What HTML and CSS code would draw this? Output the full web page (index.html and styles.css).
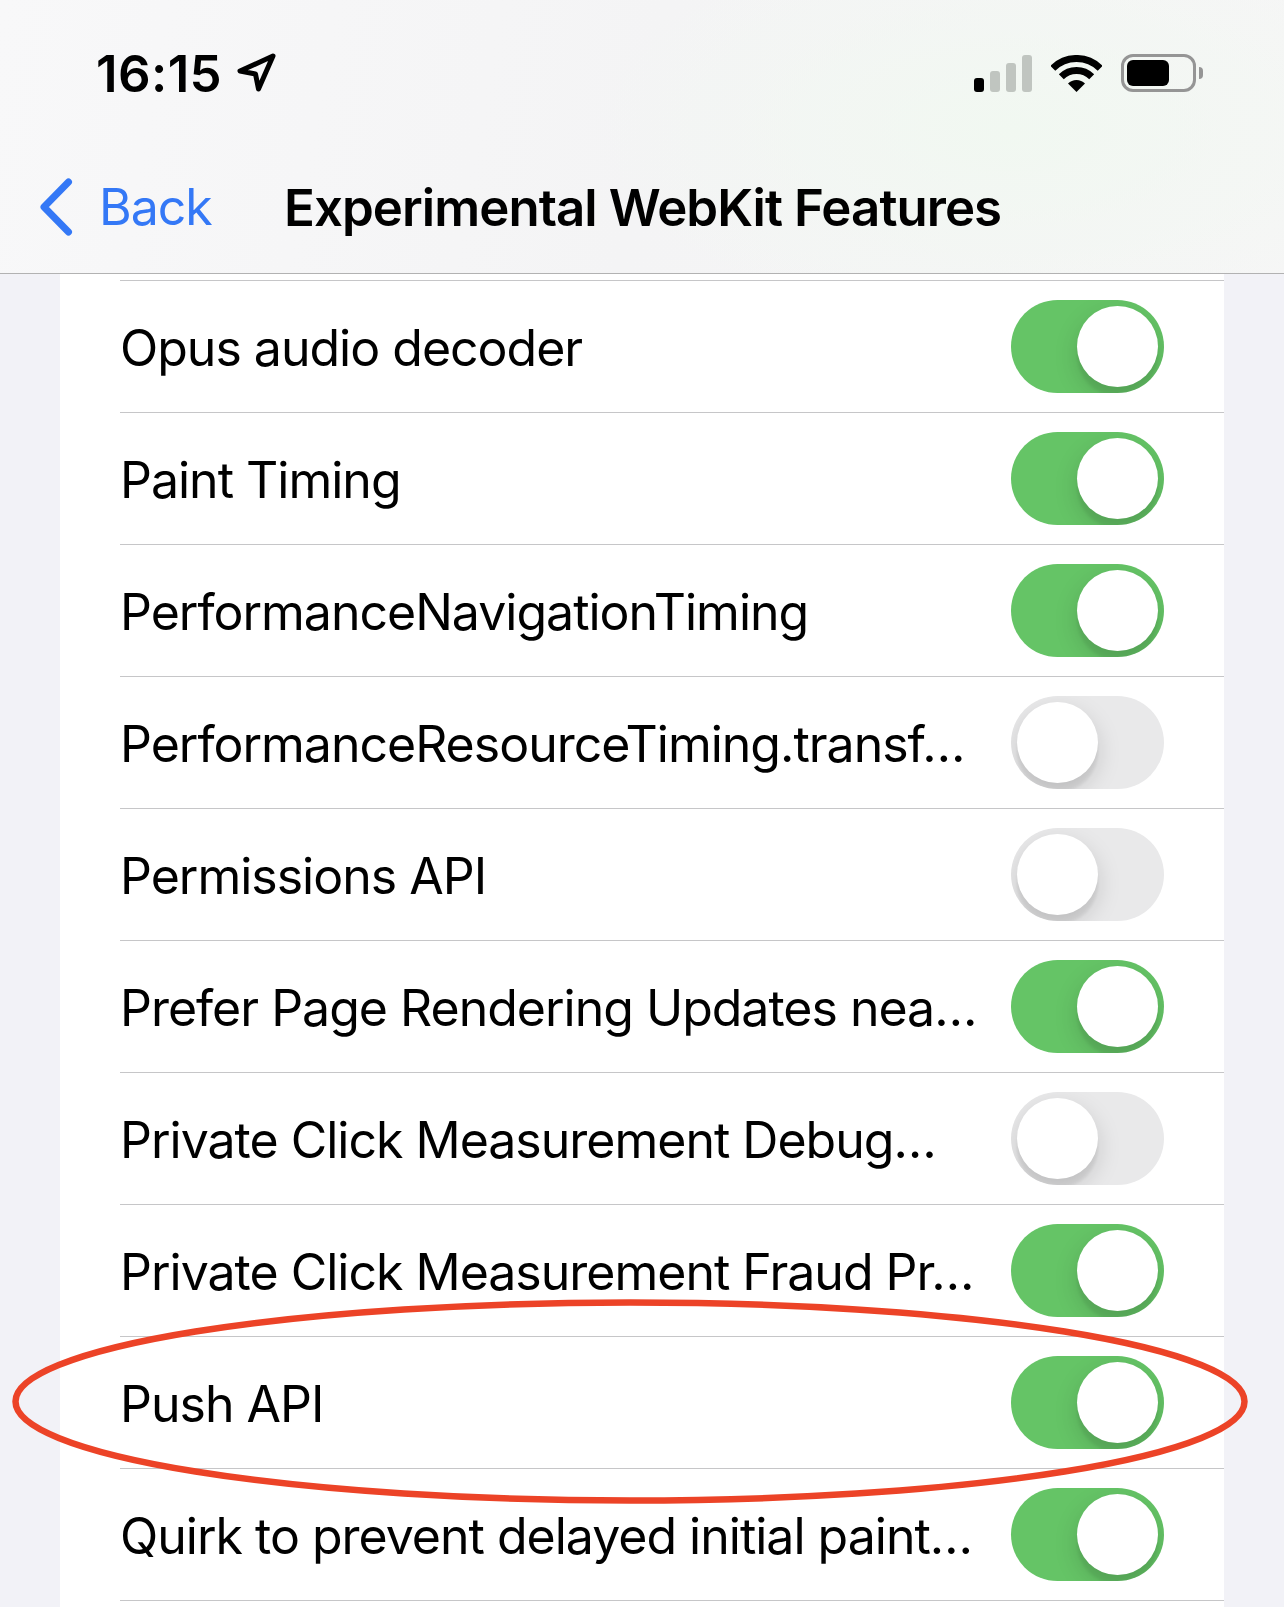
FILE: index.html
```html
<!DOCTYPE html>
<html lang="en">
<head>
  <meta charset="UTF-8">
  <title>Experimental WebKit Features</title>
  <link rel="stylesheet" href="styles.css">
</head>
<body>
  <header class="top">
    <div class="status">
      <div class="clock">
        <span class="time">16:15</span>
        <svg class="loc" viewBox="0 0 40 40" width="40" height="40"><path d="M36 3 L3 18 L18.5 21 L21.5 36 Z" fill="none" stroke="#000" stroke-width="5" stroke-linejoin="round"/></svg>
      </div>
      <div class="indicators">
        <div class="signal">
          <span class="bar bar1"></span>
          <span class="bar bar2"></span>
          <span class="bar bar3"></span>
          <span class="bar bar4"></span>
        </div>
        <svg class="wifi" viewBox="0 0 51 37" width="51" height="37">
          <path d="M1.8 13.3 A33.5 33.5 0 0 1 49.2 13.3" fill="none" stroke="#000" stroke-width="7"/>
          <path d="M10.3 21.8 A21.5 21.5 0 0 1 40.7 21.8" fill="none" stroke="#000" stroke-width="7"/>
          <path d="M25.5 37 L17 28.5 A12 12 0 0 1 34 28.5 Z"/>
        </svg>
        <div class="battery"><span class="charge"></span></div>
        <span class="battery-cap"></span>
      </div>
    </div>
    <nav class="navbar">
      <a class="back" href="#">
        <svg viewBox="0 0 34 58" width="34" height="58"><path d="M29.5 4 L5 29 L29.5 54" fill="none" stroke="#3478f6" stroke-width="7" stroke-linecap="round" stroke-linejoin="round"/></svg>
        <span>Back</span>
      </a>
      <h1>Experimental WebKit Features</h1>
    </nav>
  </header>

  <main class="list">
    <div class="sliver"></div>
    <div class="row"><span class="label">Opus audio decoder</span><div class="toggle on"><span class="thumb"></span></div></div>
    <div class="row"><span class="label">Paint Timing</span><div class="toggle on"><span class="thumb"></span></div></div>
    <div class="row"><span class="label">PerformanceNavigationTiming</span><div class="toggle on"><span class="thumb"></span></div></div>
    <div class="row"><span class="label">PerformanceResourceTiming.transf…</span><div class="toggle"><span class="thumb"></span></div></div>
    <div class="row"><span class="label">Permissions API</span><div class="toggle"><span class="thumb"></span></div></div>
    <div class="row"><span class="label">Prefer Page Rendering Updates nea…</span><div class="toggle on"><span class="thumb"></span></div></div>
    <div class="row"><span class="label">Private Click Measurement Debug…</span><div class="toggle"><span class="thumb"></span></div></div>
    <div class="row"><span class="label">Private Click Measurement Fraud Pr…</span><div class="toggle on"><span class="thumb"></span></div></div>
    <div class="row"><span class="label">Push API</span><div class="toggle on"><span class="thumb"></span></div></div>
    <div class="row"><span class="label">Quirk to prevent delayed initial paint…</span><div class="toggle on"><span class="thumb"></span></div></div>
  </main>

  <!-- hand-drawn red marker round the Push API row -->
  <svg class="marker" viewBox="0 0 1284 1607" width="1284" height="1607">
    <ellipse cx="630" cy="1401.5" rx="614.5" ry="99" fill="none" stroke="#ec4327" stroke-width="6.5"/>
  </svg>
</body>
</html>
```

FILE: styles.css
```css
* {
  margin: 0;
  padding: 0;
  box-sizing: border-box;
}
body {
  position: relative;
  width: 1284px;
  height: 1607px;
  overflow: hidden;
  display: flex;
  flex-direction: column;
  background: #f2f2f7;
  font-family: Inter, "Liberation Sans", sans-serif;
  color: #000;
}
.top {
  height: 274px;
  flex-shrink: 0;
  border-bottom: 1px solid #b2b2b2;
  background:
    radial-gradient(ellipse 420px 200px at 1010px 130px, #f1f8f1, rgba(241, 248, 241, 0)),
    linear-gradient(100deg, #f8f8f9, #f4f4f5 50%, #f6f6f6);
}
.status {
  display: flex;
  justify-content: space-between;
  align-items: center;
  height: 146px;
  padding: 0 81px 0 96px;
}
.clock {
  display: flex;
  align-items: center;
  gap: 15px;
}
.time {
  font-size: 51px;
  font-weight: 600;
  letter-spacing: 0.4px;
}
.indicators {
  display: flex;
  align-items: center;
}
.signal {
  display: flex;
  align-items: flex-end;
  gap: 6px;
  height: 37px;
  margin-right: 19px;
}
.bar {
  width: 10px;
  border-radius: 3px;
  background: #c0c5c0;
}
.bar1 { height: 14px; background: #000; }
.bar2 { height: 21px; }
.bar3 { height: 29px; }
.bar4 { height: 37px; }
.battery {
  width: 75px;
  height: 38px;
  margin-left: 19px;
  padding: 3px;
  border: 3px solid #959595;
  border-radius: 12px;
}
.charge {
  display: block;
  width: 42px;
  height: 100%;
  border-radius: 6px;
  background: #000;
}
.battery-cap {
  width: 4px;
  height: 12px;
  margin-left: 3px;
  border-radius: 0 6px 6px 0;
  background: #959595;
}
.navbar {
  display: flex;
  align-items: center;
  height: 114px;
  padding: 8px 0 0 39px;
}
.back {
  display: flex;
  align-items: center;
  gap: 26px;
  width: 245px;
  font-size: 50px;
  letter-spacing: -1px;
  color: #3478f6;
  text-decoration: none;
}
.navbar h1 {
  font-size: 51px;
  font-weight: 600;
  letter-spacing: -0.95px;
}
.list {
  flex: 1;
  margin: 0 60px;
  overflow: hidden;
  background: #fff;
}
.sliver {
  height: 7px;
  margin-left: 60px;
  border-bottom: 1px solid #c6c6c8;
}
.row {
  display: flex;
  align-items: center;
  justify-content: space-between;
  height: 132px;
  margin-left: 60px;
  padding-right: 60px;
  border-bottom: 1px solid #c6c6c8;
}
.label {
  padding-top: 2px;
  font-size: 50px;
  letter-spacing: -1px;
  white-space: nowrap;
}
.toggle {
  position: relative;
  flex-shrink: 0;
  width: 153px;
  height: 93px;
  overflow: hidden;
  border-radius: 47px;
  background: #e9e9ea;
}
.toggle.on {
  background: #65c466;
}
.thumb {
  position: absolute;
  top: 6px;
  left: 6px;
  width: 81px;
  height: 81px;
  border-radius: 50%;
  background: #fff;
  box-shadow: 0 9px 24px rgba(0, 0, 0, 0.15), 0 9px 3px rgba(0, 0, 0, 0.06);
}
.toggle.on .thumb {
  left: 66px;
}
.marker {
  position: absolute;
  top: 0;
  left: 0;
  pointer-events: none;
}
```
